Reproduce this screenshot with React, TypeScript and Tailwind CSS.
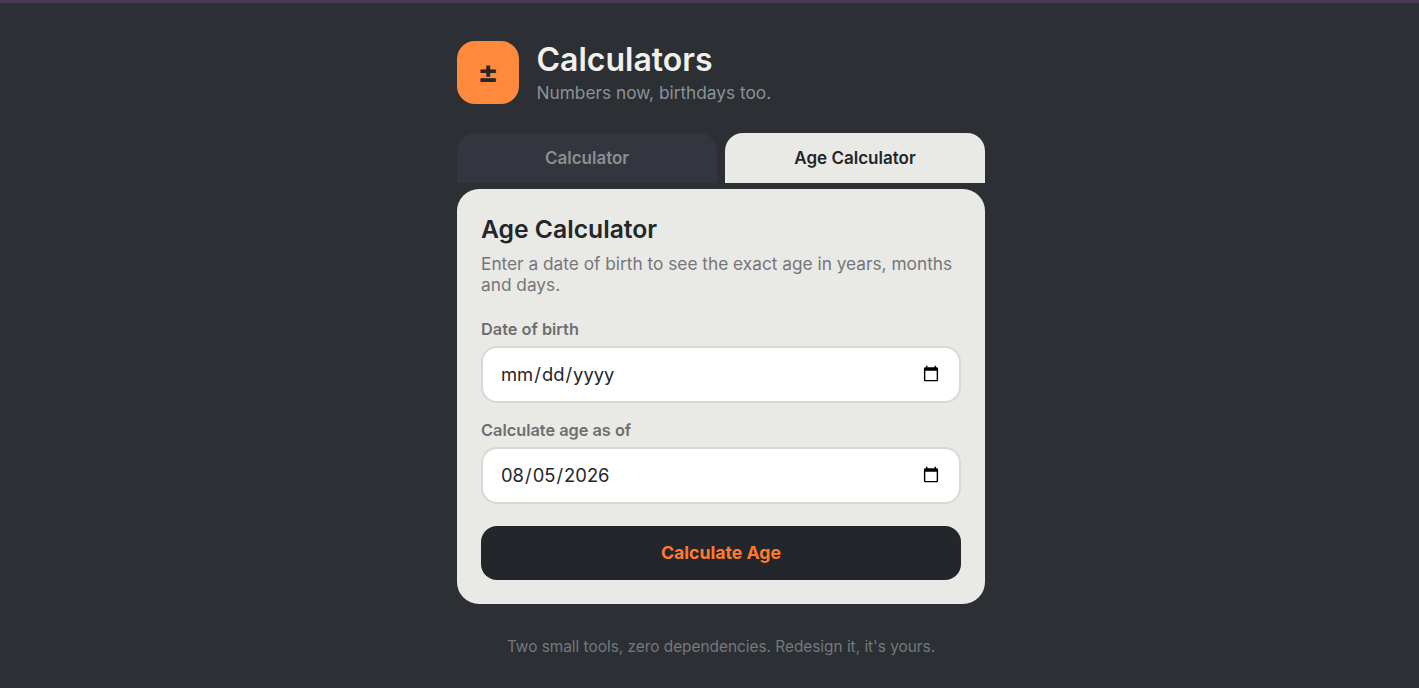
export default function App() {
  return (
    <div className="min-h-screen bg-[#2c2f34] font-['Inter',sans-serif]">
      <div className="h-[3px] bg-[#4a3a55]" />
      <div className="flex justify-center pl-[23px] pt-[38px]">
        <div className="flex w-[528px] flex-col">
          <header className="flex items-start gap-[17.5px]">
            <div className="flex h-[63px] w-[62px] items-center justify-center rounded-[18px] bg-[#ff8a3d] text-[31px] font-bold text-[#24262b]">±</div>
            <div>
              <h1 className="text-[32px] leading-[38px] font-semibold text-[#f0f0ec]">Calculators</h1>
              <p className="mt-[2px] text-[17.28px] leading-[24px] text-[#8b9296]">Numbers now, birthdays too.</p>
            </div>
          </header>
          <div className="mt-[28px] flex gap-2">
            <button className="h-[50px] flex-1 rounded-t-[18px] bg-[#33363e] pt-[2px] text-[17px] font-semibold text-[#8e8e8e]">Calculator</button>
            <button className="h-[50px] flex-1 rounded-t-[18px] bg-[#e9e9e5] pt-[2px] text-[17px] font-semibold text-[#23262a]">Age Calculator</button>
          </div>
          <main className="mt-[6px] rounded-[22px] bg-[#e9e9e5] px-6 pt-6 pb-6">
            <h2 className="text-[24.7px] leading-[33px] font-semibold text-[#23262a]">Age Calculator</h2>
            <p className="mt-[7px] text-[17.28px] leading-[21px] text-[#76767a]">Enter a date of birth to see the exact age in years, months and days.</p>
            <label className="mt-[24px] block text-[16.32px] leading-[20px] font-semibold text-[#6e6e72]">Date of birth</label>
            <input type="date" className="mt-[7px] block h-[57px] w-full rounded-[16px] border-2 border-[#d9d9d4] bg-white pr-[17px] pl-[17px] text-[18.4px] text-[#23262a]" />
            <label className="mt-[17px] block text-[16.32px] leading-[20px] font-semibold text-[#6e6e72]">Calculate age as of</label>
            <input type="date" defaultValue="2026-08-05" className="mt-[7px] block h-[57px] w-full rounded-[16px] border-2 border-[#d9d9d4] bg-white pr-[17px] pl-[17px] text-[18.4px] text-[#23262a]" />
            <button className="mt-[22px] h-[54px] w-full rounded-[16px] bg-[#23262a] text-[17.7px] font-bold text-[#ff7a2f]">Calculate Age</button>
          </main>
          <footer className="mt-[33px] text-center text-[15.36px] leading-[20px] text-[#74787d]">Two small tools, zero dependencies. Redesign it, it's yours.</footer>
        </div>
      </div>
    </div>
  );
}
